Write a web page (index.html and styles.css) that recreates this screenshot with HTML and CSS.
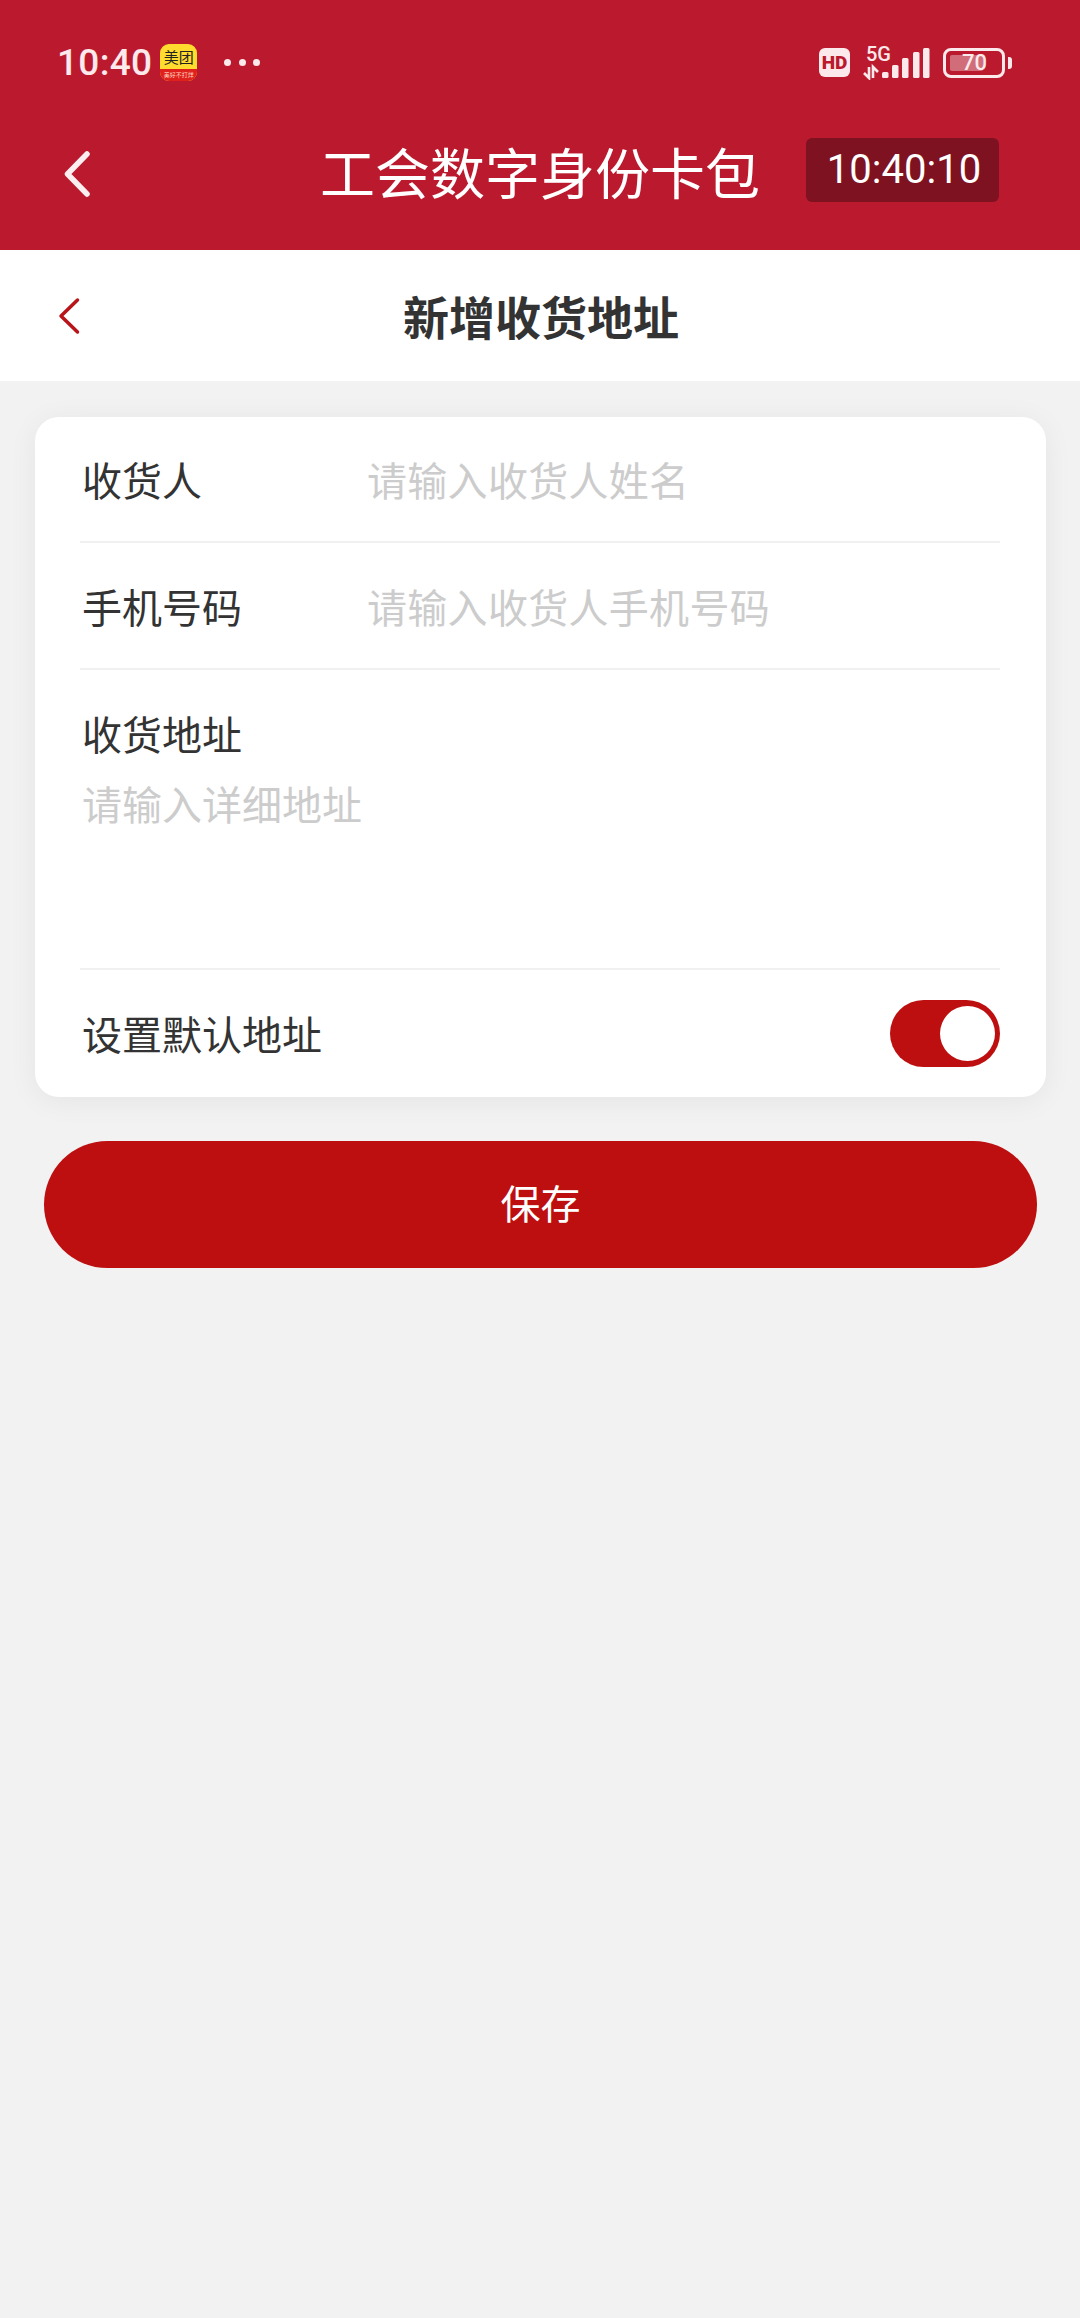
FILE: index.html
```html
<!DOCTYPE html>
<html lang="zh-CN">
  <head>
    <meta charset="UTF-8" />
    <meta name="viewport" content="width=device-width, initial-scale=1.0" />
    <title>新增收货地址</title>
    <link rel="stylesheet" href="styles.css">
  </head>
  <body>
    <div class="top">
      <div class="statusbar">
        <div class="status-left">
          <span class="clock">10:40</span>
          <div class="mt-icon">
            <span class="mt-name">美团</span>
            <span class="mt-strip">美好不打烊</span>
          </div>
          <div class="dots"><i></i><i></i><i></i></div>
        </div>
        <div class="status-right">
          <span class="hd">HD</span>
          <div class="signal">
            <span class="five-g">5G</span>
            <svg width="67" height="34" viewBox="0 0 67 34">
              <path d="M6 21v11L1 27M10 32V21l5 5" stroke="#fbe9eb" stroke-width="2.6" fill="none"/>
              <rect x="19" y="26" width="6.500" height="6" rx="1.5" fill="#fbe9eb"/>
              <rect x="29" y="19" width="6.500" height="13" rx="1.5" fill="#fbe9eb"/>
              <rect x="39" y="12" width="6.500" height="20" rx="1.5" fill="#fbe9eb"/>
              <rect x="50" y="6" width="6.500" height="26" rx="1.5" fill="#fbe9eb"/>
              <rect x="60" y="2" width="6.500" height="30" rx="1.5" fill="#fbe9eb"/>
            </svg>
          </div>
          <div class="battery">
            <div class="battery-body">
              <div class="battery-fill"></div>
              <span class="battery-num">70</span>
            </div>
            <div class="battery-cap"></div>
          </div>
        </div>
      </div>
      <div class="appbar">
        <svg class="appbar-back" width="30" height="50" viewBox="0 0 30 50">
          <path d="M25 5L5.500 25L25 45" stroke="#fbeef0" stroke-width="5.500" stroke-linecap="round" stroke-linejoin="round" fill="none"/>
        </svg>
        <div class="appbar-title">工会数字身份卡包</div>
        <div class="timer">10:40:10</div>
      </div>
    </div>

    <div class="nav">
      <svg class="nav-back" width="24" height="38" viewBox="0 0 24 38">
        <path d="M20.500 3L4 19L20.500 35" stroke="#b8141a" stroke-width="3.500" stroke-linecap="round" stroke-linejoin="round" fill="none"/>
      </svg>
      <div class="nav-title">新增收货地址</div>
    </div>

    <div class="card">
      <div class="row">
        <div class="label">收货人</div>
        <div class="placeholder">请输入收货人姓名</div>
      </div>
      <div class="row">
        <div class="label">手机号码</div>
        <div class="placeholder">请输入收货人手机号码</div>
      </div>
      <div class="address">
        <div class="label">收货地址</div>
        <div class="placeholder">请输入详细地址</div>
      </div>
      <div class="row row-last">
        <div class="label">设置默认地址</div>
        <div class="switch"><div class="knob"></div></div>
      </div>
    </div>

    <div class="save">保存</div>
  </body>
</html>
```

FILE: styles.css
```css
* {
  box-sizing: border-box;
}
html,
body {
  margin: 0;
  height: 100%;
}
body {
  background-color: #f2f2f3;
  font-family: "Noto Sans CJK SC", "Noto Sans", sans-serif;
  color: #333333;
}
.top {
  height: 250px;
  background-color: #bb1a2e;
  color: #ffffff;
}
.statusbar {
  height: 125px;
  padding: 0 68px 0 57px;
  display: flex;
  justify-content: space-between;
  align-items: center;
}
.status-left,
.status-right {
  display: flex;
  align-items: center;
}
.clock {
  font-family: Roboto, sans-serif;
  font-size: 37px;
  font-weight: 500;
  letter-spacing: 0.3px;
  color: #fbe9eb;
}
.mt-icon {
  width: 37px;
  height: 37px;
  margin-left: 8px;
  border-radius: 9px;
  background-color: #ffdc2e;
  overflow: hidden;
  display: flex;
  flex-direction: column;
  align-items: center;
}
.mt-name {
  height: 25px;
  font-size: 15px;
  line-height: 25px;
  color: #222222;
}
.mt-strip {
  width: 100%;
  flex: 1;
  background-color: #e0201c;
  color: #ffd9c0;
  font-size: 6px;
  line-height: 11px;
  text-align: center;
  white-space: nowrap;
}
.dots {
  display: flex;
  gap: 7.5px;
  margin-left: 27px;
}
.dots i {
  width: 7px;
  height: 7px;
  border-radius: 50%;
  background-color: #fbe9eb;
}
.hd {
  width: 31px;
  height: 29px;
  border-radius: 6px;
  background-color: #fbe9eb;
  color: #bb1a2e;
  font-family: Roboto, sans-serif;
  font-size: 19px;
  font-weight: 900;
  line-height: 29px;
  text-align: center;
}
.signal {
  position: relative;
  width: 67px;
  height: 34px;
  margin-left: 13px;
}
.five-g {
  position: absolute;
  left: 3px;
  top: 0;
  font-family: Roboto, sans-serif;
  font-size: 20px;
  font-weight: 500;
  line-height: 16px;
  color: #fbe9eb;
}
.battery {
  display: flex;
  align-items: center;
  margin-left: 13px;
}
.battery-body {
  position: relative;
  width: 62px;
  height: 30px;
  border: 3px solid #fbe9eb;
  border-radius: 8px;
}
.battery-fill {
  position: absolute;
  left: 4px;
  top: 4px;
  bottom: 4px;
  width: 33px;
  background-color: #d16c79;
  border-radius: 2px;
}
.battery-num {
  position: absolute;
  left: 1px;
  right: 0;
  top: 0;
  text-align: center;
  font-family: Roboto, sans-serif;
  font-size: 22px;
  font-weight: 500;
  line-height: 24px;
  color: #fbe9eb;
}
.battery-cap {
  width: 4px;
  height: 12px;
  margin-left: 3px;
  border-radius: 0 3px 3px 0;
  background-color: #fbe9eb;
}
.appbar {
  position: relative;
  height: 125px;
  padding-bottom: 36px;
  display: flex;
  justify-content: center;
  align-items: center;
}
.appbar-back {
  position: absolute;
  left: 62px;
  top: 24px;
}
.appbar-title {
  font-size: 55px;
  line-height: 70px;
}
.timer {
  position: absolute;
  left: 806px;
  top: 13px;
  width: 193px;
  height: 64px;
  padding-left: 3px;
  border-radius: 6px;
  background-color: #7f1220;
  font-family: Roboto, sans-serif;
  font-size: 40px;
  line-height: 64px;
  text-align: center;
}
.nav {
  position: relative;
  height: 131px;
  background-color: #ffffff;
  display: flex;
  justify-content: center;
  align-items: center;
}
.nav-back {
  position: absolute;
  left: 57px;
  top: 47px;
}
.nav-title {
  margin: -2px 0 0 2px;
  font-size: 46px;
  font-weight: 700;
  color: #333333;
}
.card {
  margin: 36px 34px 0 35px;
  height: 680px;
  padding: 0 46px 0 45px;
  background-color: #ffffff;
  border-radius: 24px;
  box-shadow: 0 4px 30px rgba(0, 0, 0, 0.06);
}
.row {
  height: 126px;
  padding-left: 2px;
  display: flex;
  align-items: center;
  border-bottom: 2px solid #f0f0f0;
}
.row + .row {
  height: 127px;
}
.label {
  width: 285px;
  font-size: 40px;
  line-height: 56px;
  color: #333333;
  white-space: nowrap;
}
.placeholder {
  font-size: 40px;
  line-height: 56px;
  color: #cccccc;
}
.row .placeholder {
  letter-spacing: 0.3px;
}
.address {
  height: 300px;
  padding: 35px 0 0 2px;
  border-bottom: 2px solid #f0f0f0;
}
.address .placeholder {
  margin-top: 14px;
}
.row-last {
  height: 127px;
  justify-content: space-between;
  border-bottom: none;
}
.row-last .label {
  margin-top: -1px;
}
.switch {
  width: 110px;
  height: 67px;
  padding: 6px 5px;
  border-radius: 34px;
  background-color: #bd0f0f;
  display: flex;
  justify-content: flex-end;
}
.knob {
  width: 55px;
  height: 55px;
  border-radius: 50%;
  background-color: #ffffff;
}
.save {
  margin: 44px 43px 0 44px;
  height: 127px;
  border-radius: 64px;
  background-color: #bd0f0f;
  color: #ffffff;
  font-size: 40px;
  line-height: 122px;
  text-align: center;
}
```
